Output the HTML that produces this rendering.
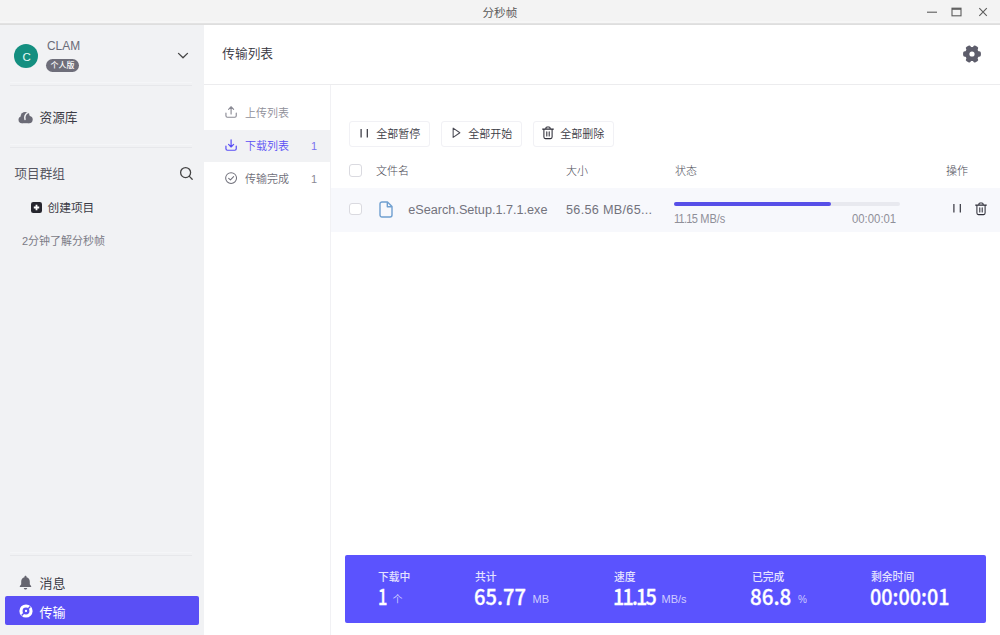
<!DOCTYPE html>
<html lang="zh-CN">
<head>
<meta charset="utf-8">
<title>分秒帧</title>
<style>
*{box-sizing:border-box;margin:0;padding:0}
html,body{width:1000px;height:635px;overflow:hidden;background:#fff}
body{font-family:"Liberation Sans","Noto Sans CJK SC",sans-serif;font-size:12px;color:#4a4a55;position:relative}
.abs{position:absolute}
.t{position:absolute;white-space:nowrap;line-height:1}
#titlebar{left:0;top:0;width:1000px;height:25px;background:#f3f3f3;border-bottom:1px solid #dedede;box-shadow:inset 0 -1px 0 #e2e2e2,inset 0 -3px 0 #f6f6f6}
#sidebar{left:0;top:25px;width:204px;height:610px;background:#f1f2f4}
#header{left:204px;top:25px;width:796px;height:60px;background:#fff;border-bottom:1px solid #ececee}
#subnav{left:204px;top:85px;width:127px;height:550px;background:#fff;border-right:1px solid #f1f1f4}
.num{position:absolute;white-space:nowrap;line-height:1;font-family:"Noto Sans CJK SC","Liberation Sans",sans-serif;font-size:22px;color:#fff;font-weight:500;-webkit-text-stroke:0.3px #fff;transform-origin:0 50%;top:583.500px}
.lab{position:absolute;white-space:nowrap;line-height:1;font-size:10.8px;color:#e4e2ff;font-weight:500;top:572px}
.unit{position:absolute;white-space:nowrap;line-height:1;font-size:11px;color:#cfccff;font-weight:300;top:594px}
.hr{position:absolute;height:1px;background:#e7e8eb;box-shadow:0 -3px 0 #f5f6f8}
svg{position:absolute;overflow:visible}
</style>
</head>
<body>
<div id="titlebar" class="abs"></div>
<div class="t" style="left:482.500px;top:7.300px;font-size:11.600px;color:#5a5a5a">分秒帧</div>
<svg style="left:926px;top:6px" width="60" height="12" viewBox="0 0 60 12" fill="none" stroke="#5c5c5c" stroke-width="1.100">
  <path d="M1 6.2H11"/>
  <rect x="26" y="2.2" width="9" height="7.6"/><path d="M26 3H35" stroke-width="1.6"/>
  <path d="M53.300 2.200L60.800 9.800M60.800 2.200L53.300 9.800"/>
</svg>

<div id="sidebar" class="abs"></div>
<div class="abs" style="left:14.300px;top:44px;width:24px;height:24px;border-radius:50%;background:#148f80"></div>
<div class="t" style="left:14.700px;top:51.700px;width:24px;text-align:center;font-size:11.5px;color:#e8fbf7">C</div>
<div class="t" style="left:46.5px;top:38.5px;font-size:13.6px;color:#6b6c78;transform:scaleX(.875);transform-origin:0 50%">CLAM</div>
<div class="abs" style="left:46px;top:59px;width:33px;height:13px;border-radius:7px;background:#6e6e7a"></div>
<div class="t" style="left:46px;top:61.5px;width:33px;text-align:center;font-size:8px;color:#fff;font-weight:500">个人版</div>
<svg style="left:177px;top:52px" width="12" height="8" viewBox="0 0 12 8" fill="none" stroke="#444" stroke-width="1.3" stroke-linecap="round" stroke-linejoin="round"><path d="M1.500 1.400L6 5.800L10.500 1.400"/></svg>
<div class="hr" style="left:10px;top:85px;width:182px"></div>

<svg style="left:18px;top:110px" width="16" height="14" viewBox="0 0 16 14"><g fill="#6b6b76"><circle cx="7.200" cy="6.500" r="4.600"/><circle cx="3.900" cy="9.800" r="3.400"/><circle cx="11.100" cy="9.600" r="3.600"/><rect x="3.900" y="9" width="7.200" height="4.200"/></g><path d="M9.400 2.800C7.300 4.200 6.300 6.400 7 9.400" fill="none" stroke="#f1f2f4" stroke-width="1.500" stroke-linecap="round"/></svg>
<div class="t" style="left:39.5px;top:111.5px;font-size:12.7px;color:#3c3c46">资源库</div>
<div class="hr" style="left:10px;top:147px;width:182px"></div>

<div class="t" style="left:14.5px;top:167.5px;font-size:12.6px;color:#565661">项目群组</div>
<svg style="left:178.500px;top:165.700px" width="15" height="15" viewBox="0 0 15 15" fill="none" stroke="#444" stroke-width="1.3" stroke-linecap="round"><circle cx="6.6" cy="6.6" r="5"/><path d="M10.4 10.4L13.2 13.2"/></svg>
<svg style="left:31px;top:202px" width="11" height="11" viewBox="0 0 11 11"><rect x="0" y="0" width="11" height="11" rx="2.2" fill="#26262e"/><path d="M5.5 2.8V8.2M2.8 5.5H8.2" stroke="#fff" stroke-width="1.8"/></svg>
<div class="t" style="left:47.5px;top:202px;font-size:11.7px;color:#3c3c46">创建项目</div>
<div class="t" style="left:22px;top:236.200px;font-size:11px;color:#7b7b86">2分钟了解分秒帧</div>

<div class="hr" style="left:10px;top:555px;width:182px"></div>
<svg style="left:19px;top:575px" width="13" height="15" viewBox="0 0 13 15"><path fill="#65656f" d="M6.5 0.8c.6 0 1 .4 1 1v.5c2 .5 3.300 2.200 3.300 4.400v2.600l1.400 2v.7H.8v-.7l1.400-2V6.700c0-2.200 1.300-3.900 3.300-4.400v-.5c0-.6.400-1 1-1zM4.800 13h3.400c0 .9-.8 1.500-1.700 1.500S4.800 13.900 4.800 13z"/></svg>
<div class="t" style="left:39.500px;top:576.800px;font-size:13px;color:#3c3c46">消息</div>
<div class="abs" style="left:5px;top:596px;width:193.500px;height:29px;border-radius:2px;background:#5a4ff5"></div>
<svg style="left:18.500px;top:604.400px" width="14" height="14" viewBox="0 0 14 14"><circle cx="7" cy="7" r="6.600" fill="#fff"/><circle cx="7" cy="7" r="2.300" fill="none" stroke="#5a4ff5" stroke-width="2.300"/><path d="M9.200 4.800L11.400 2.600M4.800 9.200L2.600 11.400" stroke="#5a4ff5" stroke-width="1.400" fill="none"/></svg>
<div class="t" style="left:39.500px;top:605.500px;font-size:13px;color:#fff;font-weight:400">传输</div>

<div id="header" class="abs"></div>
<div class="t" style="left:222.300px;top:48.300px;font-size:12.700px;color:#33333c;font-weight:350">传输列表</div>
<svg style="left:963px;top:45.200px" width="18" height="18" viewBox="0 0 18 18"><g fill="#5d5d6b" transform="rotate(30 9 9)"><circle cx="9" cy="9" r="7"/><g><rect x="6.300" y="0.100" width="5.400" height="17.800" rx="1.700"/><rect x="6.300" y="0.100" width="5.400" height="17.800" rx="1.700" transform="rotate(60 9 9)"/><rect x="6.300" y="0.100" width="5.400" height="17.800" rx="1.700" transform="rotate(120 9 9)"/></g></g><circle cx="9" cy="9" r="2.600" fill="#fff"/></svg>

<div id="subnav" class="abs"></div>
<div class="abs" style="left:204px;top:129.500px;width:126px;height:32px;background:#f1f2f4"></div>
<svg style="left:224.600px;top:106.400px" width="12.200" height="12.200" viewBox="0 0 13 13" fill="none" stroke="#8a8a94" stroke-width="1.200" stroke-linecap="round" stroke-linejoin="round"><path d="M1 7.500V10.500a1.500 1.500 0 0 0 1.500 1.500h8a1.500 1.500 0 0 0 1.500-1.500V7.500"/><path d="M6.500 8.500V1M3.800 3.500L6.500 .8L9.200 3.500"/></svg>
<div class="t" style="left:245px;top:108px;font-size:11px;color:#8f8f99;font-weight:350">上传列表</div>
<svg style="left:224.600px;top:138.800px" width="12.200" height="12.200" viewBox="0 0 13 13" fill="none" stroke="#5a4ff5" stroke-width="1.300" stroke-linecap="round" stroke-linejoin="round"><path d="M1 7.500V10.500a1.500 1.500 0 0 0 1.500 1.500h8a1.500 1.500 0 0 0 1.500-1.500V7.500"/><path d="M6.500 .8V8.300M3.800 5.800L6.500 8.500L9.200 5.800"/></svg>
<div class="t" style="left:245px;top:141px;font-size:11px;color:#5a4ff5;font-weight:350">下载列表</div>
<div class="t" style="left:311px;top:141px;font-size:11px;color:#7a72f0">1</div>
<svg style="left:224.600px;top:171.600px" width="12.200" height="12.200" viewBox="0 0 13 13" fill="none" stroke="#6f6f7a" stroke-width="1.100" stroke-linecap="round" stroke-linejoin="round"><circle cx="6.500" cy="6.500" r="5.800"/><path d="M3.900 6.700L5.800 8.500L9.200 4.900"/></svg>
<div class="t" style="left:245px;top:174px;font-size:11px;color:#6f6f7a;font-weight:350">传输完成</div>
<div class="t" style="left:311px;top:174px;font-size:11px;color:#8a8a94">1</div>

<!-- toolbar buttons -->
<div class="abs" style="left:349px;top:121px;width:81px;height:26px;border:1px solid #f1f1f5;border-radius:3px;background:#fff"></div>
<svg style="left:360px;top:128.800px" width="9" height="10" viewBox="0 0 9 10" stroke="#33333c" stroke-width="1.200"><path d="M1.100 0V8.600M7.300 0V8.600"/></svg>
<div class="t" style="left:376.300px;top:129px;font-size:11px;color:#3a3a44;font-weight:350">全部暂停</div>
<div class="abs" style="left:441px;top:121px;width:81px;height:26px;border:1px solid #f1f1f5;border-radius:3px;background:#fff"></div>
<svg style="left:452px;top:127.200px" width="9" height="11.500" viewBox="0 0 9 12" fill="none" stroke="#4a4a54" stroke-width="1.100" stroke-linejoin="round"><path d="M1 1.200L8 6L1 10.800z"/></svg>
<div class="t" style="left:468.300px;top:129px;font-size:11px;color:#3a3a44;font-weight:350">全部开始</div>
<div class="abs" style="left:533px;top:121px;width:81px;height:26px;border:1px solid #f1f1f5;border-radius:3px;background:#fff"></div>
<svg style="left:542px;top:126px" width="12" height="14" viewBox="0 0 12 14" fill="none" stroke="#2e2e38" stroke-width="1.050" stroke-linecap="round" stroke-linejoin="round"><path d="M.6 3.100H11.400M3.900 3V2.100a1.100 1.100 0 0 1 1.100-1.100h2a1.100 1.100 0 0 1 1.100 1.100V3M1.900 3.300V11.100a1.500 1.500 0 0 0 1.500 1.500h5.200a1.500 1.500 0 0 0 1.500-1.500V3.300M4.800 5.800V9.900M7.200 5.800V9.900"/></svg>
<div class="t" style="left:560.300px;top:129px;font-size:11px;color:#3a3a44;font-weight:350">全部删除</div>

<!-- table header -->
<div class="abs" style="left:349px;top:164.300px;width:12.500px;height:12.500px;border:1px solid #dadae0;border-radius:3px;background:#fff"></div>
<div class="t" style="left:376px;top:166px;font-size:11px;color:#4a4a55;font-weight:300">文件名</div>
<div class="t" style="left:566px;top:166px;font-size:11px;color:#4a4a55;font-weight:300">大小</div>
<div class="t" style="left:675px;top:166px;font-size:11px;color:#4a4a55;font-weight:300">状态</div>
<div class="t" style="left:946px;top:166px;font-size:11px;color:#4a4a55;font-weight:300">操作</div>

<!-- row -->
<div class="abs" style="left:331px;top:188px;width:669px;height:43.500px;background:#f7f8fc"></div>
<div class="abs" style="left:349px;top:202.600px;width:12.500px;height:12.500px;border:1px solid #dadae0;border-radius:3px;background:#fff"></div>
<svg style="left:379px;top:201px" width="14" height="17" viewBox="0 0 14 17" fill="none" stroke="#6f9fd0" stroke-width="1.400" stroke-linejoin="round"><path d="M1 3a2 2 0 0 1 2-2H8.500L13 5.500V14a2 2 0 0 1-2 2H3a2 2 0 0 1-2-2z"/><path d="M8.300 1.200V5.700H12.800"/></svg>
<div class="t" style="left:408.300px;top:203.600px;font-size:12.650px;color:#73737d">eSearch.Setup.1.7.1.exe</div>
<div class="t" style="left:566px;top:203.600px;font-size:12.650px;color:#73737d;letter-spacing:0.3px">56.56 MB/65...</div>
<div class="abs" style="left:674px;top:201.500px;width:226px;height:4px;border-radius:2px;background:#e8e9ef"></div>
<div class="abs" style="left:674px;top:201.500px;width:157px;height:4px;border-radius:2px;background:#574fe8"></div>
<div class="t" style="left:674px;top:212.500px;font-size:12px;color:#8f8f99;transform:scaleX(.92);transform-origin:0 50%"><span style="letter-spacing:-0.8px">11.15</span> MB/s</div>
<div class="t" style="left:851.500px;top:212.500px;font-size:12px;color:#8f8f99;transform:scaleX(.945);transform-origin:0 50%">00:00:01</div>
<svg style="left:953px;top:204.400px" width="9" height="10" viewBox="0 0 9 10" stroke="#2e2e38" stroke-width="1.150"><path d="M0.900 0V8.500M7.300 0V8.500"/></svg>
<svg style="left:975px;top:202px" width="12" height="14" viewBox="0 0 12 14" fill="none" stroke="#2e2e38" stroke-width="1.050" stroke-linecap="round" stroke-linejoin="round"><path d="M.6 3.100H11.400M3.900 3V2.100a1.100 1.100 0 0 1 1.100-1.100h2a1.100 1.100 0 0 1 1.100 1.100V3M1.900 3.300V11.100a1.500 1.500 0 0 0 1.500 1.500h5.200a1.500 1.500 0 0 0 1.500-1.500V3.300M4.800 5.800V9.900M7.200 5.800V9.900"/></svg>

<!-- stats bar -->
<div class="abs" style="left:345px;top:555px;width:641px;height:68px;border-radius:2px;background:#5b53fe"></div>
<div class="lab" style="left:378px">下载中</div>
<div class="num" id="n1" style="left:377.500px;transform:scaleX(.75)">1</div>
<div class="unit" style="left:392.500px;font-size:10px;top:594.500px;font-weight:350;color:#d6d3ff">个</div>
<div class="lab" style="left:475px">共计</div>
<div class="num" id="n2" style="left:474.200px;transform:scaleX(.915)">65.77</div>
<div class="unit" style="left:532.5px">MB</div>
<div class="lab" style="left:614px">速度</div>
<div class="num" id="n3" style="left:612.500px;transform:scaleX(.9)"><span style="letter-spacing:-2px">11.1</span>5</div>
<div class="unit" style="left:661.5px">MB/s</div>
<div class="lab" style="left:752px">已完成</div>
<div class="num" id="n4" style="left:750.200px;transform:scaleX(.935)">86.8</div>
<div class="unit" style="left:798px;font-size:10px;top:594.500px">%</div>
<div class="lab" style="left:871px">剩余时间</div>
<div class="num" id="n5" style="left:870px;transform:scaleX(.9)">00:00:01</div>
</body>
</html>
